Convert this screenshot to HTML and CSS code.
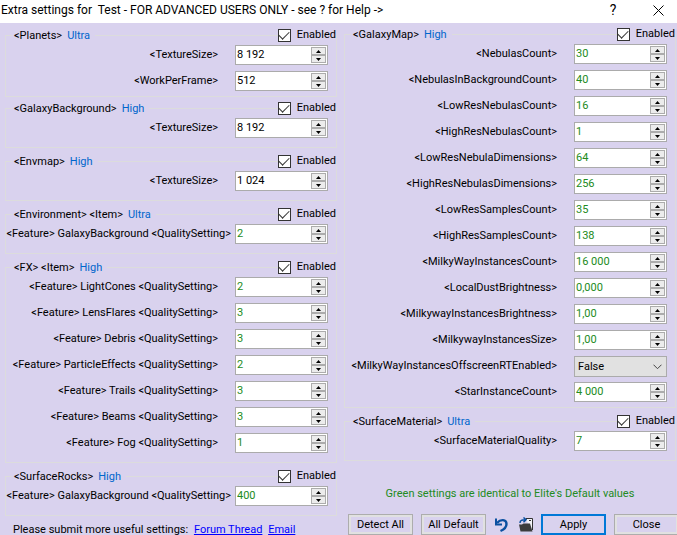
FILE: index.html
```html
<!DOCTYPE html>
<html lang="en">

<head>
    <meta charset="UTF-8">
    <meta name="viewport" content="width=device-width, initial-scale=1.0">
    <title>Extra settings</title>
    <link rel="stylesheet" href="styles.css">
</head>

<body>
    <header class="titlebar">
        <h1>Extra settings for&nbsp; Test - FOR ADVANCED USERS ONLY - see ? for Help -&gt;</h1>
        <button class="title-btn" aria-label="Help">?</button>
        <button class="title-btn" aria-label="Close window">
            <svg width="11" height="11" viewBox="0 0 11 11"><path d="M.5.5l10 10M10.5.5l-10 10" stroke="#000" fill="none"/></svg>
        </button>
    </header>

    <main class="columns">
        <div class="column" id="left"></div>
        <div class="column" id="right"></div>
    </main>

    <template id="leftFooter">
        <p class="submit">Please submit more useful settings: <a href="#forum">Forum Thread</a> <a href="#email">Email</a></p>
    </template>

    <template id="rightFooter">
        <p class="note">Green settings are identical to Elite's Default values</p>
        <div class="actions">
            <button class="btn">Detect All</button>
            <button class="btn">All Default</button>
            <button class="icon-btn" aria-label="Undo">
                <svg width="15" height="16" viewBox="0 0 15 16"><path d="M3 6C6.500 2 12.500 2 12.500 7C12.500 10.500 10 12.500 6.500 14" fill="none" stroke="#0b50a0" stroke-width="2.400"/><path d="M2 1.500V7.500H8" fill="none" stroke="#0b50a0" stroke-width="2"/></svg>
            </button>
            <button class="icon-btn" aria-label="Reload from folder">
                <svg width="16" height="16" viewBox="0 0 16 16"><path d="M9 3V1.500H15.500V13" fill="#f4f4f8" stroke="#333" /><path d="M12 3.500h2" stroke="#333"/><path d="M2 7.500H5L6.500 6.500H13L15.500 14.500H3.500Z" fill="#3c3c3c"/><path d="M3 6C3 3.500 5 2.800 8 2.800M6.500.5L9 2.800L6.500 5.300" fill="none" stroke="#0b50a0" stroke-width="1.500"/></svg>
            </button>
            <button class="btn primary">Apply</button>
            <button class="btn">Close</button>
        </div>
    </template>

    <script>
        const leftGroups = [
            { name: '<Planets>', level: 'Ultra', cls: 'tight planets', rows: [['<TextureSize>', '8 192', 1], ['<WorkPerFrame>', '512', 1]] },
            { name: '<GalaxyBackground>', level: 'High', rows: [['<TextureSize>', '8 192', 1]] },
            { name: '<Envmap>', level: 'High', rows: [['<TextureSize>', '1 024', 1]] },
            { name: '<Environment> <Item>', level: 'Ultra', cls: 'wide', rows: [['<Feature> GalaxyBackground <QualitySetting>', '2']] },
            { name: '<FX> <Item>', level: 'High', rows: [
                ['<Feature> LightCones <QualitySetting>', '2'],
                ['<Feature> LensFlares <QualitySetting>', '3'],
                ['<Feature> Debris <QualitySetting>', '3'],
                ['<Feature> ParticleEffects <QualitySetting>', '2'],
                ['<Feature> Trails <QualitySetting>', '3'],
                ['<Feature> Beams <QualitySetting>', '3'],
                ['<Feature> Fog <QualitySetting>', '1']
            ] },
            { name: '<SurfaceRocks>', level: 'High', cls: 'wide', rows: [['<Feature> GalaxyBackground <QualitySetting>', '400']] }
        ];
        const rightGroups = [
            { name: '<GalaxyMap>', level: 'High', cls: 'tight', rows: [
                ['<NebulasCount>', '30'],
                ['<NebulasInBackgroundCount>', '40'],
                ['<LowResNebulasCount>', '16'],
                ['<HighResNebulasCount>', '1'],
                ['<LowResNebulaDimensions>', '64'],
                ['<HighResNebulasDimensions>', '256'],
                ['<LowResSamplesCount>', '35'],
                ['<HighResSamplesCount>', '138'],
                ['<MilkyWayInstancesCount>', '16 000'],
                ['<LocalDustBrightness>', '0,000'],
                ['<MilkywayInstancesBrightness>', '1,00'],
                ['<MilkywayInstancesSize>', '1,00'],
                ['<MilkyWayInstancesOffscreenRTEnabled>', 'False', 'select'],
                ['<StarInstanceCount>', '4 000']
            ] },
            { name: '<SurfaceMaterial>', level: 'Ultra', rows: [['<SurfaceMaterialQuality>', '7']] }
        ];

        let count = 0;

        function esc(text) {
            return text.replace(/</g, '&lt;').replace(/>/g, '&gt;');
        }

        function rowHtml([label, value, type]) {
            const id = 'f' + (++count);
            let field;
            if (type === 'select') {
                field = `<div class="select-wrap"><select id="${id}"><option>${value}</option><option>True</option></select>
                    <svg width="9" height="6" viewBox="0 0 9 6"><path d="M.5.7l4 4l4-4" fill="none" stroke="#444"/></svg></div>`;
            } else {
                field = `<div class="spinner"><input type="text" id="${id}" value="${value}" class="${type ? 'changed' : ''}">
                    <div class="arrows">
                        <button aria-label="Up"><svg width="5" height="3" viewBox="0 0 5 3"><path d="M0 3L2.500 0L5 3z"/></svg></button>
                        <button aria-label="Down"><svg width="5" height="3" viewBox="0 0 5 3"><path d="M0 0L2.500 3L5 0z"/></svg></button>
                    </div></div>`;
            }
            return `<div class="row"><label for="${id}">${esc(label)}</label>${field}</div>`;
        }

        function groupHtml(g) {
            return `<section class="group ${g.cls || ''}">
                <div class="group-head">
                    <h2>${esc(g.name)}<span class="level">${g.level}</span></h2>
                    <label class="enabled"><input type="checkbox" checked>Enabled</label>
                </div>
                <div class="rows">${g.rows.map(rowHtml).join('')}</div>
            </section>`;
        }

        document.getElementById('left').innerHTML =
            leftGroups.map(groupHtml).join('') + document.getElementById('leftFooter').innerHTML;
        document.getElementById('right').innerHTML =
            rightGroups.map(groupHtml).join('') + document.getElementById('rightFooter').innerHTML;
    </script>
</body>

</html>
```

FILE: styles.css
```css
* {
    box-sizing: border-box;
}

body {
    margin: 0;
    min-height: 100vh;
    overflow: hidden;
    background-color: #d9d2ee;
    color: #000;
    font-family: Roboto, "Liberation Sans", sans-serif;
    font-size: 11px;
}

h1, h2, p {
    margin: 0;
    font-size: inherit;
    font-weight: normal;
}

button, input, select {
    font: inherit;
    color: inherit;
}

/* title bar */
.titlebar {
    display: flex;
    align-items: center;
    height: 23px;
    padding: 0 0 3px 1px;
    background: white;
    font-size: 12px;
}

.titlebar h1 {
    flex: 1;
    white-space: nowrap;
}

.title-btn {
    display: flex;
    align-items: center;
    justify-content: center;
    width: 52px;
    height: 20px;
    padding: 0;
    border: none;
    background: none;
    font-size: 14px;
}

.title-btn:last-child {
    width: 38px;
}

/* settings groups */
.columns {
    display: grid;
    grid-template-columns: 1fr 1fr;
    gap: 7px;
    padding: 12px 1px 0 5px;
}

.column {
    min-width: 0;
}

#right {
    margin-top: -1px;
}

.group {
    margin-bottom: 13px;
    padding-bottom: 9px;
    border: 1px solid #dcdcdc;
}

.group.tight {
    padding-bottom: 5px;
}

.group.planets {
    margin-bottom: 11px;
}

.group-head {
    display: flex;
    justify-content: space-between;
    height: 16px;
    margin: -9px 0 2px 6px;
    line-height: 18px;
}

.group-head h2 {
    padding: 0 5px 0 2px;
    background: #d9d2ee;
    white-space: nowrap;
}

.level {
    margin-left: 5px;
    color: #0066cc;
}

.enabled {
    display: flex;
    align-items: center;
    gap: 6px;
    background: #d9d2ee;
}

.enabled input {
    appearance: none;
    width: 13px;
    height: 13px;
    margin: 0;
    border: 1px solid #333;
    background: white;
    display: grid;
    place-items: center;
}

.enabled input:checked::before {
    content: "";
    width: 9px;
    height: 5px;
    margin-top: -2px;
    border: solid #333;
    border-width: 0 0 1px 1px;
    transform: rotate(-45deg);
}

.rows {
    display: grid;
    gap: 6px;
    padding-right: 8px;
}

.row {
    display: flex;
    justify-content: flex-end;
    height: 20px;
    line-height: 19px;
}

.row label {
    padding-right: 17px;
    white-space: nowrap;
}

.wide .row label {
    padding-right: 4px;
}

.spinner, .select-wrap {
    display: flex;
    flex: none;
    width: 93px;
    height: 20px;
    border: 1px solid #ababab;
    background: white;
}

.spinner input {
    flex: 1;
    min-width: 0;
    padding: 0 1px 2px;
    border: none;
    background: none;
    color: #228b22;
}

.spinner input.changed {
    color: #000;
}

.arrows {
    display: grid;
    grid-template-rows: 1fr 1fr;
    width: 16px;
    padding: 1px 1px 1px 0;
}

.arrows button {
    display: flex;
    align-items: center;
    justify-content: center;
    min-height: 0;
    padding: 0;
    border: 1px solid #acacac;
    background: #ececec;
}

.select-wrap {
    position: relative;
    height: 21px;
    background: #e1e1e1;
}

.select-wrap select {
    appearance: none;
    width: 100%;
    padding: 0 3px;
    border: none;
    background: none;
}

.select-wrap svg {
    position: absolute;
    right: 4px;
    top: 7px;
    pointer-events: none;
}

/* bottom line */
.submit {
    padding-left: 8px;
    line-height: 13px;
    margin-top: -6px;
    white-space: nowrap;
}

.submit a {
    margin-left: 3px;
    color: #0000ff;
}

.note {
    margin: 26px 0 13px;
    line-height: 14px;
    color: #228b22;
    text-align: center;
}

.actions {
    display: flex;
    align-items: center;
    gap: 8px;
    padding-left: 4px;
}

.btn {
    flex: none;
    width: 65px;
    height: 21px;
    padding: 0;
    border: 1px solid #adadad;
    background: #d9d2ee;
    box-shadow: inset 0 0 0 2px #e1e1e1;
}

.btn.primary {
    border: 2px solid #0078d7;
    box-shadow: none;
}

.icon-btn {
    display: flex;
    flex: none;
    padding: 0;
    border: none;
    background: none;
}
```
